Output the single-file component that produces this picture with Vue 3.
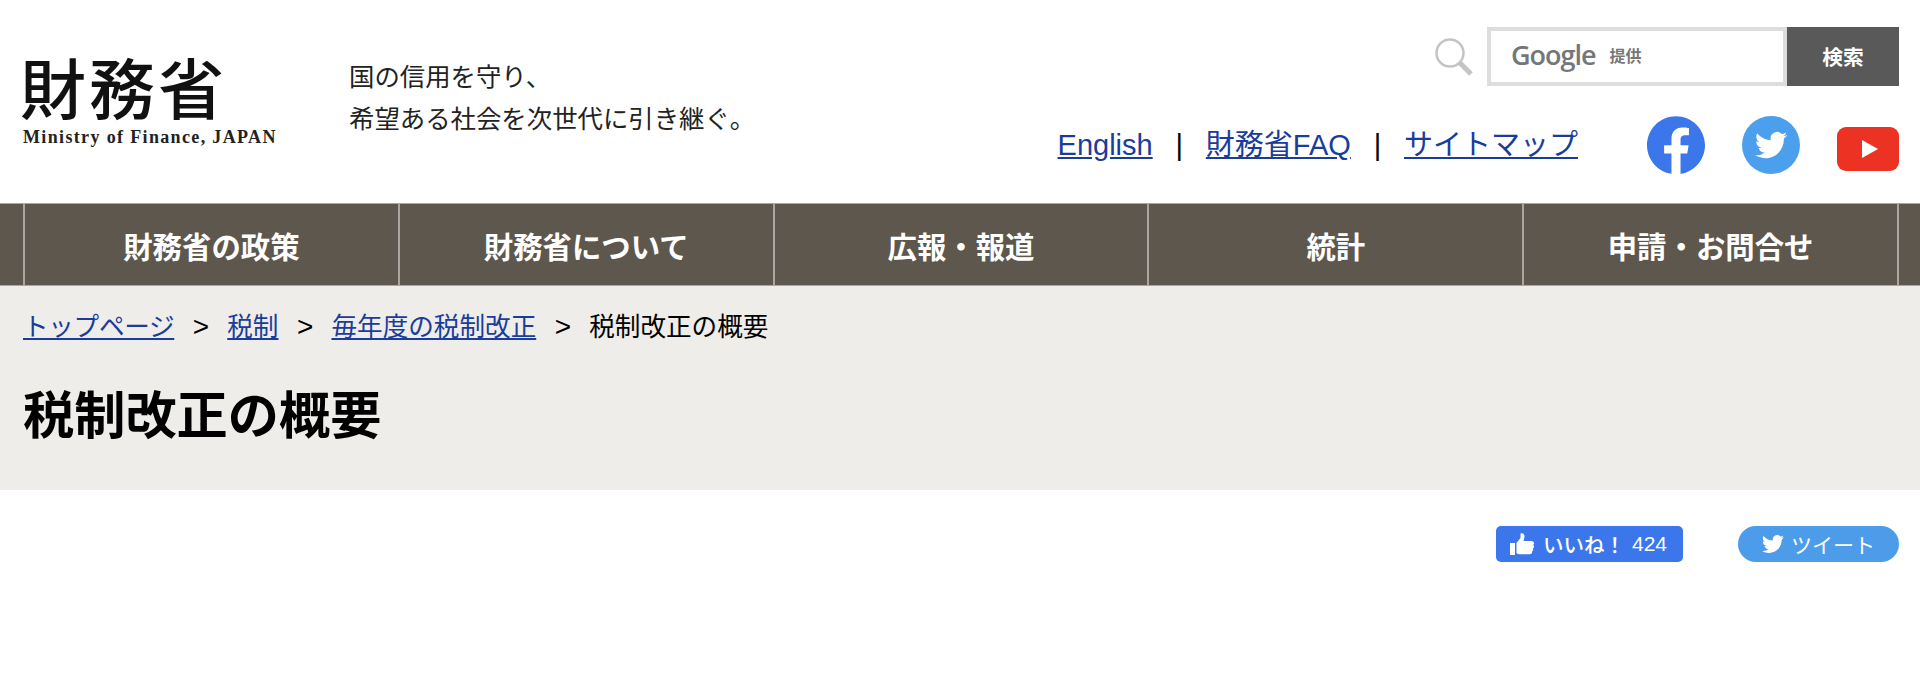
<script setup>
const navItems = ['財務省の政策', '財務省について', '広報・報道', '統計', '申請・お問合せ']
const crumbs = ['トップページ', '税制', '毎年度の税制改正']
const birdPath = 'M23.953 4.57a10 10 0 01-2.825.775 4.958 4.958 0 002.163-2.723c-.951.555-2.005.959-3.127 1.184a4.92 4.92 0 00-8.384 4.482C7.69 8.095 4.067 6.13 1.64 3.162a4.822 4.822 0 00-.666 2.475c0 1.71.87 3.213 2.188 4.096a4.904 4.904 0 01-2.228-.616v.06a4.923 4.923 0 003.946 4.827 4.996 4.996 0 01-2.212.085 4.936 4.936 0 004.604 3.417 9.867 9.867 0 01-6.102 2.105c-.39 0-.779-.023-1.17-.067a13.995 13.995 0 007.557 2.209c9.053 0 13.998-7.496 13.998-13.985 0-.21 0-.42-.015-.63A9.935 9.935 0 0024 4.59z'
</script>

<template>
  <div class="page">
    <header class="site-header">
      <div class="brand">
        <div class="logo">
          <div class="logo-kanji">財務省</div>
          <div class="logo-en">Ministry of Finance, JAPAN</div>
        </div>
        <p class="tagline">国の信用を守り、<br />希望ある社会を次世代に引き継ぐ。</p>
      </div>

      <div class="tools">
        <div class="search">
          <svg class="search-icon" viewBox="0 0 40 40" fill="none">
            <circle cx="16" cy="16" r="13.5" stroke="#c4c4c4" stroke-width="2.5" />
            <path d="M26 26l11 11" stroke="#c4c4c4" stroke-width="5" />
          </svg>
          <div class="search-box">
            <span class="google">Google</span>
            <span class="provided">提供</span>
          </div>
          <button class="search-btn">検索</button>
        </div>

        <div class="links-row">
          <nav class="links">
            <a href="#">English</a>
            <span class="bar">|</span>
            <a href="#">財務省FAQ</a>
            <span class="bar">|</span>
            <a href="#">サイトマップ</a>
          </nav>
          <div class="sns">
            <svg class="sns-round" viewBox="0 0 24 24">
              <path fill="#3b77ea" d="M24 12.073c0-6.627-5.373-12-12-12s-12 5.373-12 12c0 5.99 4.388 10.954 10.125 11.854v-8.385H7.078v-3.47h3.047V9.43c0-3.007 1.792-4.669 4.533-4.669 1.312 0 2.686.235 2.686.235v2.953H15.83c-1.491 0-1.956.925-1.956 1.874v2.25h3.328l-.532 3.47h-2.796v8.385C19.612 23.027 24 18.062 24 12.073z" />
            </svg>
            <svg class="sns-round" viewBox="0 0 58 58">
              <circle cx="29" cy="29" r="29" fill="#4c9fec" />
              <path fill="#fff" transform="translate(13 13) scale(1.34)" :d="birdPath" />
            </svg>
            <svg class="sns-yt" viewBox="0 0 62 44">
              <rect width="62" height="44" rx="9" fill="#ec3323" />
              <path fill="#fff" d="M25 13v18l16-9z" />
            </svg>
          </div>
        </div>
      </div>
    </header>

    <nav class="main-nav">
      <a v-for="item in navItems" :key="item" href="#" class="nav-item">{{ item }}</a>
    </nav>

    <section class="title-panel">
      <div class="breadcrumb">
        <template v-for="(c, i) in crumbs" :key="c">
          <a href="#" :class="{ 'crumb-first': i === 0 }">{{ c }}</a>
          <span class="crumb-sep">&gt;</span>
        </template>
        <span>税制改正の概要</span>
      </div>
      <h1>税制改正の概要</h1>
    </section>

    <div class="share">
      <a href="#" class="like">
        <svg class="thumb" viewBox="0 0 24 24">
          <path fill="#fff" d="M0 11h5v12H0zM6.5 11l4-5V1.500c2.500-1 4 .8 4 3 0 1.500-.5 3-1 4.500h8c1.500 0 2.500 1 2.500 2.200 0 .8-.3 1.300-.8 1.800.6.500.8 1 .8 1.700 0 .8-.5 1.400-1.200 1.800.3.400.4.800.4 1.300 0 .8-.5 1.400-1.300 1.700.1.300.2.500.2.800 0 1.200-1 2-2.300 2H10c-1.500 0-2.500-.5-3.500-1z" />
        </svg>
        <span class="like-label">いいね！</span>
        <span class="like-count">424</span>
      </a>
      <a href="#" class="tweet">
        <svg class="tweet-bird" viewBox="0 0 24 24"><path fill="#fff" :d="birdPath" /></svg>
        <span>ツイート</span>
      </a>
    </div>
  </div>
</template>

<style scoped>
.page {
  min-height: 678px;
  background: #fff;
  color: #000;
  font-family: "Liberation Sans", "Noto Sans CJK JP", sans-serif;
}

a {
  color: #1a3c9b;
}

.site-header {
  height: 203px;
  box-sizing: border-box;
  padding: 27px 21px 0 23px;
  display: flex;
  justify-content: space-between;
  align-items: flex-start;
}

.brand {
  display: flex;
  gap: 73px;
}

.logo {
  width: 253px;
  padding-top: 28px;
}

.logo-kanji {
  font-size: 66px;
  line-height: 72px;
  font-weight: 500;
  letter-spacing: 3px;
  margin-left: -3px;
  color: #111;
}

.logo-en {
  font-family: "Liberation Serif", serif;
  font-size: 18px;
  line-height: 20px;
  font-weight: 700;
  letter-spacing: 1.350px;
  white-space: nowrap;
  color: #222;
}

.tagline {
  margin: 29px 0 0;
  font-size: 25.400px;
  line-height: 42px;
  color: #222;
  white-space: nowrap;
}

.tools {
  display: flex;
  flex-direction: column;
  align-items: flex-end;
}

.search {
  display: flex;
  align-items: flex-start;
}

.search-icon {
  width: 40px;
  height: 40px;
  margin: 10px 13px 0 0;
}

.search-box {
  width: 300px;
  height: 59px;
  box-sizing: border-box;
  border: 4px solid #ddd;
  padding: 0 0 4px 20px;
  display: flex;
  align-items: center;
  gap: 14px;
}

.google {
  font-family: "Open Sans", sans-serif;
  font-size: 27px;
  font-weight: 600;
  letter-spacing: -1px;
  color: #74767a;
}

.provided {
  font-size: 16px;
  font-weight: 700;
  color: #777;
}

.search-btn {
  width: 112px;
  height: 59px;
  border: 0;
  padding: 0 0 2px;
  background: #595959;
  color: #fff;
  font-family: inherit;
  font-size: 20.800px;
  font-weight: 700;
}

.links-row {
  margin-top: 30px;
  display: flex;
  align-items: center;
}

.links {
  display: flex;
  align-items: center;
  gap: 22.800px;
  font-size: 29px;
  line-height: 54px;
  white-space: nowrap;
}

.bar {
  color: #000;
}

.sns {
  margin-left: 69px;
  display: flex;
  align-items: center;
  gap: 37px;
}

.sns-round {
  width: 58px;
  height: 58px;
  display: block;
}

.sns-yt {
  width: 62px;
  height: 44px;
  margin-top: 7px;
  display: block;
}

.main-nav {
  height: 83px;
  box-sizing: border-box;
  padding-left: 23px;
  display: flex;
  background: #5e574e;
  border-top: 1px solid #a9a5a0;
  border-bottom: 1px solid #a9a5a0;
}

.nav-item {
  width: 374.800px;
  box-sizing: border-box;
  border-left: 2px solid #a9a5a0;
  display: flex;
  align-items: center;
  justify-content: center;
  color: #fff;
  font-size: 29.400px;
  font-weight: 700;
  text-decoration: none;
}

.nav-item:last-child {
  width: 376.800px;
  border-right: 2px solid #a9a5a0;
}

.title-panel {
  height: 204px;
  box-sizing: border-box;
  padding: 22px 23px 0;
  background: #eeedea;
}

.breadcrumb {
  display: flex;
  align-items: center;
  gap: 18.500px;
  font-size: 25.600px;
  line-height: 38px;
  white-space: nowrap;
}

.crumb-first {
  letter-spacing: -0.3px;
}

.crumb-sep {
  width: 16px;
  font-size: 28px;
  line-height: 38px;
}

h1 {
  margin: 33px 0 0;
  font-size: 51.200px;
  line-height: 76px;
  font-weight: 700;
}

.share {
  padding: 36px 21px 0 0;
  display: flex;
  justify-content: flex-end;
  gap: 55px;
}

.like,
.tweet {
  height: 36px;
  display: flex;
  align-items: center;
  color: #fff;
  text-decoration: none;
  font-size: 21px;
}

.like {
  width: 187px;
  box-sizing: border-box;
  padding-left: 14px;
  background: #3b77ea;
  border-radius: 5px;
}

.thumb {
  width: 24px;
  height: 24px;
}

.like-label {
  margin-left: 9px;
  font-size: 20.500px;
  font-weight: 500;
}

.like-count {
  margin-left: 7px;
}

.tweet {
  width: 161px;
  box-sizing: border-box;
  padding-left: 24px;
  background: #4c9ce9;
  border-radius: 18px;
}

.tweet-bird {
  width: 22px;
  height: 22px;
  margin-right: 7px;
}
</style>
